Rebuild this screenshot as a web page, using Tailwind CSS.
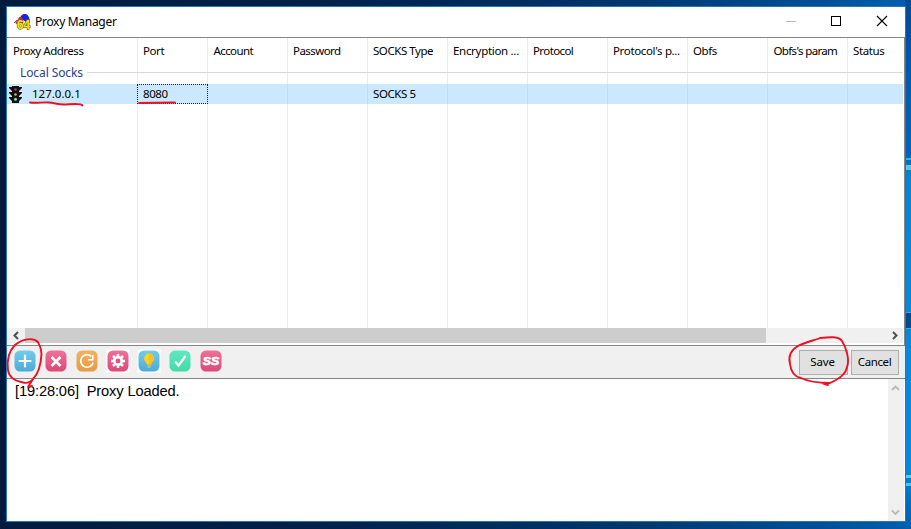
<!DOCTYPE html>
<html lang="en">
<head>
<meta charset="utf-8">
<title>Proxy Manager</title>
<script src="https://cdn.jsdelivr.net/npm/@tailwindcss/browser@4"></script>
</head>
<body class="relative h-[529px] w-[911px] overflow-hidden bg-[linear-gradient(90deg,#001b3d_0%,#00214a_35%,#00376f_70%,#00529b_92%,#005fb0_100%)] pt-[6px] pl-[6px] font-['Noto_Sans',sans-serif] text-[11.5px] text-black">
<!-- desktop strip right of the window -->
<div class="absolute top-0 left-[905px] h-[529px] w-[6px] bg-[linear-gradient(180deg,#004a94_0px,#0058aa_60px,#0063b8_155px,#0a84d0_175px,#0788d8_310px,#0788d8_470px,#0066b8_510px,#005fae_529px)]">
  <div class="absolute top-[158px] h-[2px] w-full bg-[#35b4e4]"></div>
  <div class="absolute top-[165px] h-[5px] w-full bg-[#5cc5e3]"></div>
  <div class="absolute top-[312px] h-[17px] w-full border-y border-[#3fa5dd] bg-[#004c90]"></div>
  <div class="absolute top-[475px] h-[3px] w-full bg-[#55cfe8]"></div>
  <div class="absolute top-[483px] h-[3px] w-full bg-[#55bfe8]"></div>
</div>

<main class="relative flex h-[516px] w-[900px] flex-col border border-[#2677b5] bg-white">
  <header class="flex h-[30px] shrink-0 items-center pl-[7px]">
    <svg class="h-[17px] w-[18px]" viewBox="0 0 18 17">
      <path d="M1 9L5 4L9 1L9 10Z" fill="#d8223e"/>
      <path d="M6 4Q8 -1 12 0Q16 2 16 9L12 8Z" fill="#1725dc"/>
      <path d="M5 3L9 4L7 7L3 9Z" fill="#e72531"/>
      <path d="M0 9l3-3M2 10l3-4" stroke="#9150a5"/>
      <text x="3" y="14.500" font-family="Liberation Sans" font-size="13" font-weight="bold" textLength="13" lengthAdjust="spacingAndGlyphs" fill="#f5e21c" stroke="#6f6a18" stroke-width="1.300" paint-order="stroke">64</text>
    </svg>
    <h1 class="ml-[3px] text-[12px] tracking-[-0.3px]">Proxy Manager</h1>
    <svg class="ml-auto h-[30px] w-[120px]" viewBox="0 0 120 30" fill="none" shape-rendering="crispEdges">
      <path d="M1 14.5H11" stroke="#bbb"/>
      <rect x="46.500" y="9.500" width="9" height="9" stroke="#000"/>
      <path d="M92 9L102 19M102 9L92 19" stroke="#000" stroke-width="1.2" shape-rendering="auto"/>
    </svg>
  </header>

  <section class="relative h-[309px] shrink-0 border-y border-r border-[#858585]">
    <div class="relative h-[290px] w-[896px] overflow-hidden">
      <div class="absolute inset-0 grid grid-cols-[131px_70px_80px_80px_80px_80px_80px_80px_80px_80px_55px]">
        <i class="border-r border-[#ebebf8]"></i><i class="border-r border-[#ebebf8]"></i><i class="border-r border-[#ebebf8]"></i><i class="border-r border-[#ebebf8]"></i><i class="border-r border-[#ebebf8]"></i><i class="border-r border-[#ebebf8]"></i><i class="border-r border-[#ebebf8]"></i><i class="border-r border-[#ebebf8]"></i><i class="border-r border-[#ebebf8]"></i><i class="border-r border-[#ebebf8]"></i>
      </div>
      <div class="relative grid h-[26px] grid-cols-[130px_70px_80px_80px_80px_80px_80px_80px_80px_80px_56px] items-center whitespace-nowrap [&>span]:pl-[6px]">
        <span class="tracking-[-0.48px]">Proxy Address</span><span class="tracking-[-0.4px]">Port</span><span class="tracking-[-0.6px]"><span class="pl-[0.5px]">Account</span></span><span class="tracking-[-0.55px]">Password</span><span class="tracking-[-0.45px]">SOCKS Type</span><span class="tracking-[-0.3px]">Encryption ...</span><span class="tracking-[-0.6px]">Protocol</span><span class="tracking-[-0.35px]">Protocol's p...</span><span class="tracking-[-0.4px]">Obfs</span><span class="tracking-[-0.65px]"><span class="pl-[0.5px]">Obfs's param</span></span><span class="tracking-[-0.4px]">Status</span>
      </div>
      <div class="relative flex h-[20px] items-center pl-[13px] text-[12px] text-[#274294]">
        <span class="-mt-[2px] tracking-[-0.1px]">Local Socks</span><span class="-mt-px ml-[4px] h-px flex-1 -translate-y-px bg-[#d5d5e6]"></span>
      </div>
      <div class="relative grid h-[20px] grid-cols-[130px_71px_159px_80px_1fr] items-center bg-[#cce8ff]">
        <div class="flex items-center">
          <svg class="ml-[2px] h-[17px] w-[13px]" viewBox="0 0 13 17">
            <path d="M3 0h7v1h3v1l-3 3v1h3v1l-3 3v1h3v1l-3 3v2H3v-2L0 12v-1h3v-1L0 7V6h3V5L0 2V1h3z" fill="#111"/>
            <circle cx="6.500" cy="3.500" r="1.300" fill="#b03a36"/><circle cx="6.500" cy="8.500" r="1.300" fill="#c5b45c"/><circle cx="6.500" cy="13.300" r="1.500" fill="#8ce39b"/>
          </svg>
          <span class="ml-[10px]">127.0.0.1</span>
        </div>
        <span class="flex h-full items-center border border-dotted border-[#222] pl-[5px] tracking-[-0.4px]">8080</span>
        <span></span><span class="pl-[6px] tracking-[-0.4px]">SOCKS 5</span>
      </div>
      <div class="pointer-events-none absolute top-[46px] left-[280px] grid h-[20px] grid-cols-[repeat(8,80px)]">
        <i class="border-l border-[#bedcf5]"></i><i class="border-l border-[#bedcf5]"></i><i class="border-l border-[#bedcf5]"></i><i class="border-l border-[#bedcf5]"></i><i class="border-l border-[#bedcf5]"></i><i class="border-l border-[#bedcf5]"></i><i class="border-l border-[#bedcf5]"></i><i class="border-l border-[#bedcf5]"></i>
      </div>
    </div>
    <div class="flex h-[15px] w-[896px] items-center bg-[#f0f0f0]">
      <svg class="h-[15px] w-[18px]" viewBox="0 0 18 15"><path d="M11 4L7.500 7.500L11 11" fill="none" stroke="#505050" stroke-width="2"/></svg>
      <div class="h-full w-[741px] bg-[#cdcdcd]"></div>
      <svg class="ml-auto h-[15px] w-[18px]" viewBox="0 0 18 15"><path d="M8 4L11.500 7.500L8 11" fill="none" stroke="#505050" stroke-width="2"/></svg>
    </div>
  </section>

  <nav class="flex h-[33px] shrink-0 items-center border-b border-[#858585] bg-[#f0f0f0] pr-[6px] pl-[7px]">
    <div class="flex gap-[9px] pb-[2px]">
      <svg class="size-[22px]" viewBox="0 0 22 22"><defs><linearGradient id="blue" x2="0" y2="1"><stop stop-color="#72cdea"/><stop offset="1" stop-color="#4daad8"/></linearGradient><linearGradient id="pink" x2="0" y2="1"><stop stop-color="#ef7198"/><stop offset="1" stop-color="#dc4978"/></linearGradient><linearGradient id="orange" x2="0" y2="1"><stop stop-color="#f2b35d"/><stop offset="1" stop-color="#e69a45"/></linearGradient><linearGradient id="green" x2="0" y2="1"><stop stop-color="#5fe9c1"/><stop offset="1" stop-color="#45d9a8"/></linearGradient></defs><rect x=".5" y=".5" width="21" height="21" rx="5.500" fill="url(#blue)"/><path d="M11 5.500v11M5.500 11h11" stroke="#fff" stroke-width="2.200" stroke-linecap="round"/></svg>
      <svg class="size-[22px]" viewBox="0 0 22 22"><rect x=".5" y=".5" width="21" height="21" rx="5.500" fill="url(#pink)"/><path d="M6.500 7l9 9M15.500 7l-9 9" stroke="#fff" stroke-width="2.500"/></svg>
      <svg class="size-[22px]" viewBox="0 0 22 22"><rect x=".5" y=".5" width="21" height="21" rx="5.500" fill="url(#orange)"/><path d="M17.100 12.500A6.300 6.300 0 1 1 15.500 6.500" fill="none" stroke="#fff" stroke-width="1.600"/><path d="M16.800 5v4.800h-4.800" fill="none" stroke="#fff" stroke-width="1.600"/></svg>
      <svg class="size-[22px] overflow-visible" viewBox="0 0 22 22"><rect x="-.5" y="-.5" width="23" height="23" fill="#fff"/><rect x=".5" y=".5" width="21" height="21" rx="5.500" fill="url(#pink)"/><path d="M11 4v14M4 11h14M6 6l10 10M16 6L6 16" stroke="#fff" stroke-width="2.500"/><circle cx="11" cy="11" r="5" fill="#fff"/><circle cx="11" cy="11" r="2.400" fill="#e4507c"/></svg>
      <svg class="size-[22px] overflow-visible" viewBox="0 0 22 22"><rect x="-.5" y="-.5" width="23" height="23" fill="#fff"/><rect x=".5" y=".5" width="21" height="21" rx="5.500" fill="url(#blue)"/><circle cx="11" cy="8.500" r="4.900" fill="#ffd21d"/><path d="M8 11h6l-.8 3.500H8.800z" fill="#ffd21d"/><path d="M11 3.600a4.900 4.900 0 0 1 3.600 8.200l-1.400 2.700H11z" fill="#fbc21b"/><path d="M9 14.500h4v2.200l-1 1.300h-2l-1-1.300z" fill="#b4bc83"/></svg>
      <svg class="size-[22px]" viewBox="0 0 22 22"><rect x=".5" y=".5" width="21" height="21" rx="5.500" fill="url(#green)"/><path d="M6 11.500l3.500 4L16.500 6" fill="none" stroke="#fff" stroke-width="2.200"/></svg>
      <svg class="size-[22px]" viewBox="0 0 22 22"><rect x=".5" y=".5" width="21" height="21" rx="5.500" fill="url(#pink)"/><text x="2.700" y="14.500" font-family="Liberation Sans" font-size="10.500" font-weight="bold" font-style="italic" textLength="16.500" lengthAdjust="spacingAndGlyphs" fill="#fff" stroke="#fff" stroke-width=".6">SS</text></svg>
    </div>
    <button class="ml-auto h-[25px] w-[49px] border border-[#adadad] bg-[#e1e1e1] pr-[2px] tracking-[-0.15px]">Save</button>
    <button class="ml-[3px] h-[25px] w-[48px] border border-[#adadad] bg-[#e1e1e1] pr-[1px] tracking-[-0.4px]">Cancel</button>
  </nav>

  <section class="flex min-h-0 flex-1 justify-between">
    <p class="pt-[3px] pl-[8px] font-['Liberation_Sans',sans-serif] text-[14.7px] leading-[18px] tracking-[-0.15px] whitespace-pre">[19:28:06]  Proxy Loaded.</p>
    <div class="mr-px flex w-[16px] flex-col justify-between bg-[#f0f0f0]">
      <svg class="h-[17px] w-[16px]" viewBox="0 0 16 17"><path d="M4 11L7.500 7.500L11 11" fill="none" stroke="#b8b8b8" stroke-width="1.800"/></svg>
      <svg class="h-[17px] w-[16px]" viewBox="0 0 16 17"><path d="M4 6.500L7.500 10L11 6.500" fill="none" stroke="#b8b8b8" stroke-width="1.800"/></svg>
    </div>
  </section>
</main>

<!-- freehand red pen marks -->
<svg class="pointer-events-none absolute top-0 left-0" width="911" height="529" viewBox="0 0 911 529" fill="none" stroke="#ed1020" stroke-width="1.900" stroke-linecap="round" stroke-linejoin="round">
  <path d="M30 102.500C36 103.500 42 102 49 102.500C55 103 59 105 66 104.500C73 104 81 103 82.500 105.500"/>
  <path d="M139 103L175 102.500"/>
  <path d="M38 342C33 337 22 339 15 345C8 352 7 362 8 370C9 378 15 381 23 382.500Q29 384 33 379C39 373 41 363 41.500 354Q41 346 37 341M33 379L28 387L32 386"/>
  <path d="M842 341C839 336 829 337 820 338C816 340 805 342 798 346C791 350 788 356 790 364C791 372 795 377 801 378C809 382 819 383 830 383C837 380 846 375 847 367C850 360 846 347 842 341M822 383L828 385"/>
</svg>
</body>
</html>
